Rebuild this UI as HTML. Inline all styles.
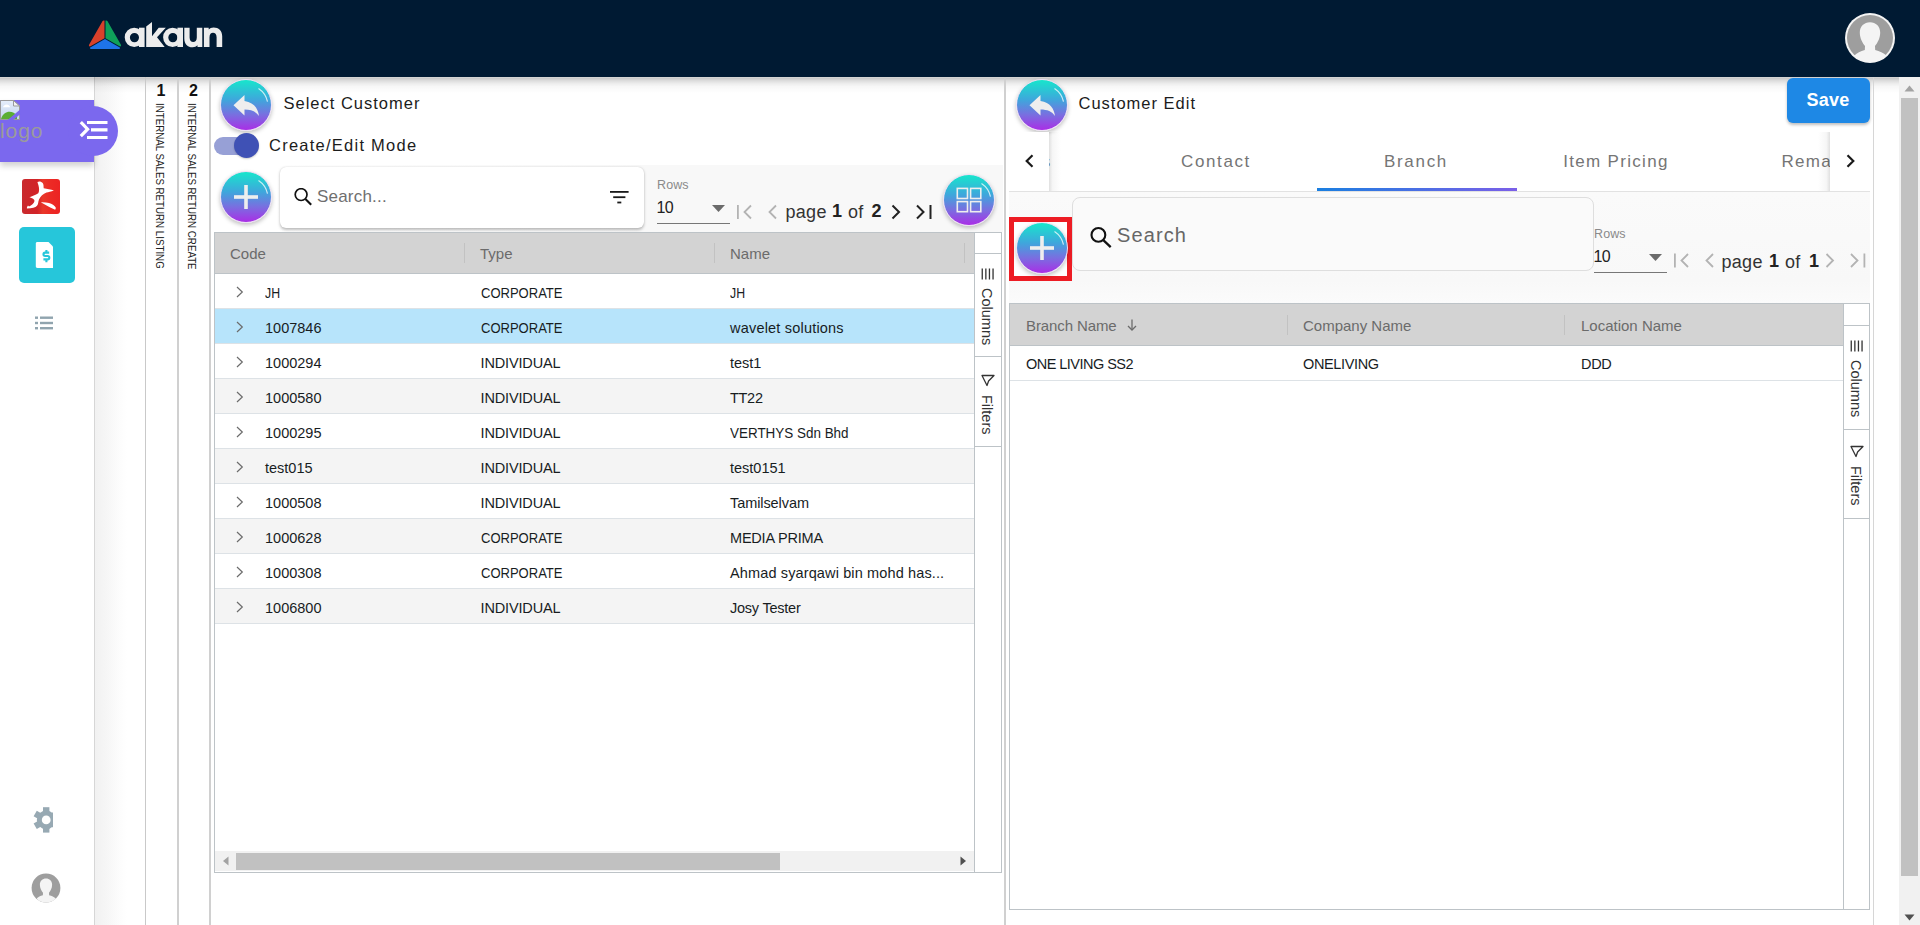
<!DOCTYPE html>
<html><head><meta charset="utf-8">
<style>
*{box-sizing:border-box;margin:0;padding:0}
html,body{width:1920px;height:925px;overflow:hidden;background:#fff;font-family:"Liberation Sans",sans-serif;color:#1a1a1a}
.a{position:absolute}
.t{position:absolute;white-space:nowrap;line-height:1}
#hdr{left:0;top:0;width:1920px;height:77px;background:#001a33}
.hshadow{left:0;top:77px;width:1899px;height:16px;background:linear-gradient(rgba(0,0,0,.16) 0,rgba(0,0,0,.2) 1.5px,rgba(0,0,0,.14) 3.5px,rgba(0,0,0,.075) 6.5px,rgba(0,0,0,.03) 9.5px,rgba(0,0,0,0) 16px)}
.vl{position:absolute;width:2px;background:#d0d0d0}
.btn{position:absolute;width:52px;height:52px;border-radius:50%;background:linear-gradient(#17e6cc 0%,#3fa6dc 40%,#7a6ee0 70%,#a92ee6 100%);box-shadow:0 2px 4px rgba(0,0,0,.25);border:1px solid #ecdff3}
.gloss{position:absolute;left:0;top:0}
.grid .hd{position:absolute;background:#d3d3d3;border-bottom:1px solid #bdc3c7}
.row{position:absolute;height:35px;border-bottom:1px solid #dde2e6}
.cell{position:absolute;top:0;height:35px;line-height:35px;font-size:14.5px;color:#181d1f;white-space:nowrap}
.hcell{position:absolute;font-size:15px;color:#6b6b6b;white-space:nowrap}
.sep{position:absolute;width:1px;background:#c4c4c4}
.poppins{letter-spacing:.4px}
</style></head>
<body>

<!-- HEADER -->
<div id="hdr" class="a">
  <svg class="a" style="left:86px;top:18px" width="38" height="34" viewBox="0 0 38 34">
    <path d="M18.5 2.6 C17.8 2.2 17 2.4 16.6 3.1 L3.2 26.6 C2.6 27.6 3 28.6 4 28.6 L18.5 20.2 Z" fill="#d9412b"/>
    <path d="M19.5 2.6 C20.2 2.2 21 2.4 21.4 3.1 L34.8 26.6 C35.4 27.6 35 28.6 34 28.6 L19.5 20.2 Z" fill="#0fa15a"/>
    <path d="M19 21 L4.2 29.6 C3.6 30.2 4 31 5 31 L33 31 C34 31 34.4 30.2 33.8 29.6 Z" fill="#1e73e8"/>
  </svg>
  <svg class="a" style="left:120px;top:18px" width="106" height="34" viewBox="0 0 106 34">
    <g fill="#ececec">
    <path fill-rule="evenodd" d="M4.7,19.35 a9.5,9.65 0 1,0 19,0 a9.5,9.65 0 1,0 -19,0 Z M9.9,19.6 a4.55,4.7 0 1,0 9.1,0 a4.55,4.7 0 1,0 -9.1,0 Z"/>
    <rect x="19" y="9.7" width="5.6" height="19.3"/>
    <path d="M26.2,8.6 L32,3.9 L32,18.2 L38.7,9.7 L45.8,9.7 L37,19.3 L44.7,29 L26.2,29 Z"/>
    <path fill-rule="evenodd" d="M43.1,19.35 a9.5,9.65 0 1,0 19,0 a9.5,9.65 0 1,0 -19,0 Z M48.3,19.6 a4.55,4.7 0 1,0 9.1,0 a4.55,4.7 0 1,0 -9.1,0 Z"/>
    <rect x="57.4" y="9.7" width="5.6" height="19.3"/>
    <path d="M64.3,9.7 H69.6 V19.5 C69.6,22.6 71.2,24 73.2,24 C75.2,24 76.8,22.6 76.8,19.5 V9.7 H82.3 V29 H77.5 V27.3 C76.3,28.6 74.8,29.3 72.6,29.3 C67.6,29.3 64.3,26 64.3,20.5 Z"/>
    <path d="M83.9,29 V9.7 H88.7 V11.4 C89.9,10.1 91.4,9.4 93.6,9.4 C98.6,9.4 102.2,12.7 102.2,18.2 V29 H96.6 V19.2 C96.6,16.1 95,14.7 93,14.7 C91,14.7 89.5,16.1 89.5,19.2 V29 Z"/>
    </g>
  </svg>
  <div class="a" style="left:1845px;top:13px;width:50px;height:50px;border-radius:50%;background:#f4f4f4;overflow:hidden">
    <svg width="50" height="50" viewBox="0 0 50 50" style="position:absolute;left:0;top:0">
      <circle cx="25" cy="25" r="23" fill="#9e9e9e"/>
      <path d="M25,9.3 C30.8,9.3 35.2,13.5 35.2,19.5 C35.2,25 32.5,30 30,33 L30.2,37 C34.5,38 38.5,40 41.5,42.4 C37.5,47 31.5,49 25,49 C18.5,49 12.5,47 9.4,42.4 C12,40 15.5,38 19.8,37 L20,33 C17.5,30 14.8,25 14.8,19.5 C14.8,13.5 19.2,9.3 25,9.3 Z" fill="#f4f4f4"/>
    </svg>
  </div>
</div>

<!-- SIDEBAR -->
<div class="a" style="left:0;top:77px;width:94px;height:848px;background:#fff"></div>
<div class="a" style="left:94px;top:77px;width:1px;height:848px;background:#d6d6d6"></div>
<div class="a" style="left:95px;top:77px;width:50px;height:848px;background:linear-gradient(90deg,#f1f1f1 0,#f6f6f6 12px,#fcfcfc 24px,#fff 32px)"></div>
<div class="a hshadow"></div>
<div class="a" style="left:0;top:100px;width:94px;height:62px;background:#7b68ee;box-shadow:0 4px 6px rgba(0,0,0,.18)"></div>
<div class="a" style="left:68px;top:106px;width:50px;height:50px;border-radius:50%;background:#7b68ee"></div>
<svg class="a" style="left:0;top:98px" width="22" height="24" viewBox="0 0 22 24">
  <defs><linearGradient id="sky" x1="0" y1="0" x2="0" y2="1"><stop offset="0" stop-color="#e6eefb"/><stop offset="1" stop-color="#c3d5ef"/></linearGradient></defs>
  <path d="M0.5,2.5 H13.5 L19.5,8 V21.5 H0.5 Z" fill="url(#sky)" stroke="#9a9a9a" stroke-width="1"/>
  <path d="M13.5,2.5 V8 H19.5 Z" fill="#f2f2f2" stroke="#9a9a9a" stroke-width="1"/>
  <path d="M3,9.2 C3.6,7.4 5,6.6 6.6,6.6 C8.4,6.6 9.6,7.8 10.1,9.2 Z" fill="#fff"/>
  <path d="M1,21 C2.5,16 6,13.7 9.5,13.7 C12.5,13.7 15,15 17,17.5 V21 Z" fill="#5aae32"/>
  <path d="M7.3,22.3 L20.5,11.3 V16.1 L12.9,22.3 Z" fill="#7b68ee"/>
</svg>
<div class="t" style="left:0px;top:120px;font-size:21px;color:#9b9b9b;letter-spacing:.9px">logo</div>
<svg class="a" style="left:79px;top:120px" width="30" height="21" viewBox="0 0 30 21">
  <path d="M1.8 2.2 L8.6 9.2 L1.8 16.2" fill="none" stroke="#fff" stroke-width="3.2"/>
  <rect x="8" y="1" width="20.5" height="3" fill="#fff"/>
  <rect x="12" y="8.2" width="16.5" height="3.3" fill="#fff"/>
  <rect x="8" y="16" width="20.5" height="3" fill="#fff"/>
</svg>
<!-- red app icon -->
<div class="a" style="left:22px;top:179px;width:38px;height:35px;border-radius:3px;background:linear-gradient(90deg,#c92a2e 0%,#d22327 40%,#e8382a 55%,#ec2a25 75%,#ec2323 100%)"></div>
<svg class="a" style="left:22px;top:178px" width="38" height="36" viewBox="0 0 38 36">
  <path fill="#fff" d="M15.5,4 C17,3 19.5,3.5 20.7,5 C21.8,6.5 21.5,8.5 21.7,10.3 C25,10.8 29,11.5 31.9,12.4 C29,13.5 26.5,13.8 24.5,14.6 C21,16 18.5,18.5 17,21.5 C16,24 16.5,26 15,27.8 C13.5,29.5 10,30.5 5,30.6 C4.5,29.8 5.3,28.5 6,27.4 L7,28.4 C9.5,27.5 12,25.5 12.5,23 C12.7,21.5 10,20 7.4,19.3 C10,18.2 13.5,17 16.3,15.2 C17.5,13 17.2,10 16.5,7.5 C16.2,6 15.5,5 15.5,4 Z"/>
  <path fill="#fff" d="M18.8,24.2 C21.5,24 24.5,24.3 27,25 C30,26 32.5,27.5 33.6,29.3 C34,30.3 33.6,31.5 33.1,31.7 C31,30.8 29,29.7 26.4,28.4 C23.5,27 21,25.5 18.8,24.2 Z"/>
</svg>
<!-- teal doc icon -->
<div class="a" style="left:19px;top:227px;width:56px;height:56px;border-radius:5px;background:#26c6da"></div>
<svg class="a" style="left:35px;top:242px" width="19" height="26" viewBox="0 0 19 26">
  <path d="M2.5 0 H13.5 L18 4.5 V26 H2.5 C1.3 26 0.8 25.3 0.8 24.3 V1.7 C0.8 0.7 1.3 0 2.5 0 Z" fill="#fff"/>
  <path d="M14.2,10.6 H10.1 Q8.5,10.6 8.5,12.3 Q8.5,14 10.1,14 H12.7 Q14.3,14 14.3,15.7 Q14.3,17.4 12.7,17.4 H8.4 M11.4,8 V10.6 M11.4,17.4 V20.2" fill="none" stroke="#26c6da" stroke-width="2.1"/>
</svg>
<!-- list icon -->
<svg class="a" style="left:35px;top:316px" width="19" height="14" viewBox="0 0 19 14">
  <g fill="#90a4ae"><rect x="0" y="0.5" width="3" height="2.4"/><rect x="5" y="0.5" width="13" height="2.4"/>
  <rect x="0" y="5.8" width="3" height="2.4"/><rect x="5" y="5.8" width="13" height="2.4"/>
  <rect x="0" y="11" width="3" height="2.4"/><rect x="5" y="11" width="13" height="2.4"/></g>
</svg>
<!-- gear -->
<div class="a" style="left:33px;top:806px;width:20px;height:28px;overflow:hidden">
<svg width="28" height="28" viewBox="0 0 28 28" style="position:absolute;left:0;top:0">
  <g fill="#97a9b3" transform="translate(13.2 13.9)">
    <circle r="9.4"/>
    <rect x="-3.2" y="-12.7" width="6.4" height="6" />
    <rect x="-3.2" y="-12.7" width="6.4" height="6" transform="rotate(60)"/>
    <rect x="-3.2" y="-12.7" width="6.4" height="6" transform="rotate(120)"/>
    <rect x="-3.2" y="-12.7" width="6.4" height="6" transform="rotate(180)"/>
    <rect x="-3.2" y="-12.7" width="6.4" height="6" transform="rotate(240)"/>
    <rect x="-3.2" y="-12.7" width="6.4" height="6" transform="rotate(300)"/>
    <circle r="4.4" fill="#fff"/>
  </g>
</svg></div>
<!-- sidebar avatar -->
<svg class="a" style="left:31px;top:873px" width="30" height="30" viewBox="0 0 50 50">
  <circle cx="25" cy="25" r="24" fill="#9e9e9e"/>
  <path d="M25,9.3 C30.8,9.3 35.2,13.5 35.2,19.5 C35.2,25 32.5,30 30,33 L30.2,37 C34.5,38 38.5,40 41.5,42.4 C37.5,47 31.5,49 25,49 C18.5,49 12.5,47 9.4,42.4 C12,40 15.5,38 19.8,37 L20,33 C17.5,30 14.8,25 14.8,19.5 C14.8,13.5 19.2,9.3 25,9.3 Z" fill="#f4f4f4"/>
</svg>

<!-- VERTICAL TABS -->
<div class="vl" style="left:145px;top:77px;height:848px;width:1px;background:#c9c9c9"></div>
<div class="vl" style="left:177px;top:77px;height:848px"></div>
<div class="vl" style="left:209px;top:77px;height:848px"></div>
<div class="t" style="left:156.5px;top:82.5px;font-size:16px;font-weight:bold;color:#111">1</div>
<div class="t" style="left:189px;top:82.5px;font-size:16px;font-weight:bold;color:#111">2</div>
<div class="t" style="left:154.3px;top:103px;font-size:11px;color:#222;transform-origin:0 0;transform:translate(11px,0) rotate(90deg) scaleX(.885)">INTERNAL SALES RETURN LISTING</div>
<div class="t" style="left:186.3px;top:103px;font-size:11px;color:#222;transform-origin:0 0;transform:translate(11px,0) rotate(90deg) scaleX(.885)">INTERNAL SALES RETURN CREATE</div>
<!-- LEFT PANEL -->
<div class="btn" style="left:220px;top:79px"></div>
<svg class="a" style="left:220px;top:79px" width="52" height="52" viewBox="-1 -1 52 52"><path d="M37.5 8.4 A21 21 0 0 1 46.5 21.6" fill="none" stroke="rgba(255,255,255,.75)" stroke-width="1.2"/><path d="M23.5 15 L12.5 25.3 L23.5 35.5 V29.5 C30.5 29.5 35 31.5 38 36 C37 29 33.5 22.5 23.5 21 Z" fill="#eeeeee"/></svg>
<div class="t" style="left:283.5px;top:95px;font-size:16.5px;letter-spacing:1px;color:#1c1c1c">Select Customer</div>
<div class="a" style="left:214px;top:137px;width:36px;height:18px;border-radius:9px;background:#97a0d6"></div>
<div class="a" style="left:234px;top:133px;width:25px;height:25px;border-radius:50%;background:#3f51b5;box-shadow:0 1px 2px rgba(0,0,0,.2)"></div>
<div class="t" style="left:269px;top:137px;font-size:16.5px;letter-spacing:1.25px;color:#1c1c1c">Create/Edit Mode</div>
<div class="a" style="left:211px;top:165px;width:792px;height:67px;background:linear-gradient(90deg,#fff 0%,#fff 8%,#f8f8f8 55%,#f8f8f8)"></div>
<div class="btn" style="left:220px;top:170.5px"></div>
<svg class="a" style="left:220px;top:170.5px" width="52" height="52" viewBox="-1 -1 52 52"><path d="M37.5 8.4 A21 21 0 0 1 46.5 21.6" fill="none" stroke="rgba(255,255,255,.75)" stroke-width="1.2"/><rect x="23.2" y="13" width="3.6" height="24" fill="#eee"/><rect x="13" y="23.2" width="24" height="3.6" fill="#eee"/></svg>
<div class="a" style="left:280px;top:166.5px;width:364px;height:61px;border-radius:6px;background:#fff;box-shadow:0 1.5px 3px rgba(0,0,0,.26),0 0 1px rgba(0,0,0,.12)"></div>
<svg class="a" style="left:294px;top:188px" width="20" height="20" viewBox="0 0 20 20"><circle cx="7.1" cy="6.6" r="5.9" fill="none" stroke="#111" stroke-width="1.7"/><path d="M11.4 11 L17.2 16.8" stroke="#111" stroke-width="2.1"/></svg>
<div class="t" style="left:317px;top:187.5px;font-size:17px;color:#6f6f6f;letter-spacing:.2px">Search...</div>
<svg class="a" style="left:609.5px;top:191.3px" width="19" height="14" viewBox="0 0 19 14"><rect x="0" y="0" width="18.6" height="1.8" fill="#1a1a1a"/><rect x="3.2" y="5.3" width="12.2" height="1.8" fill="#1a1a1a"/><rect x="7.3" y="10.6" width="4" height="1.8" fill="#1a1a1a"/></svg>
<div class="t" style="left:657px;top:179px;font-size:12.5px;color:#8a8a8a;letter-spacing:.1px">Rows</div>
<div class="t" style="left:656.5px;top:199.5px;font-size:16px;color:#222;letter-spacing:-.6px">10</div>
<svg class="a" style="left:712px;top:205px" width="13" height="7" viewBox="0 0 13 7"><path d="M0 0 H13 L6.5 7 Z" fill="#6b6b6b"/></svg>
<div class="a" style="left:657px;top:223px;width:73px;height:1px;background:#777"></div>
<svg class="a" style="left:736px;top:204px" width="18" height="16" viewBox="0 0 18 16"><rect x="1" y="1" width="1.8" height="14" fill="#b3b3b3"/><path d="M15 1.5 L8.5 8 L15 14.5" fill="none" stroke="#b3b3b3" stroke-width="1.8"/></svg>
<svg class="a" style="left:766px;top:204px" width="12" height="16" viewBox="0 0 12 16"><path d="M10 1.5 L3.5 8 L10 14.5" fill="none" stroke="#b3b3b3" stroke-width="1.8"/></svg>
<div class="t" style="left:785.5px;top:203px;font-size:18px;color:#333;letter-spacing:.3px">page</div>
<div class="t" style="left:832px;top:202px;font-size:18px;font-weight:bold;color:#222">1</div>
<div class="t" style="left:848px;top:203px;font-size:18px;color:#333;letter-spacing:.3px">of</div>
<div class="t" style="left:871.5px;top:202px;font-size:18px;font-weight:bold;color:#222">2</div>
<svg class="a" style="left:890px;top:204px" width="12" height="16" viewBox="0 0 12 16"><path d="M2.5 1.5 L9 8 L2.5 14.5" fill="none" stroke="#222" stroke-width="2"/></svg>
<svg class="a" style="left:915px;top:204px" width="18" height="16" viewBox="0 0 18 16"><path d="M2 1.5 L8.5 8 L2 14.5" fill="none" stroke="#222" stroke-width="2"/><rect x="14.5" y="1" width="2" height="14" fill="#222"/></svg>
<div class="btn" style="left:943px;top:174px"></div>
<svg class="a" style="left:943px;top:174px" width="52" height="52" viewBox="-1 -1 52 52"><path d="M37.5 8.4 A21 21 0 0 1 46.5 21.6" fill="none" stroke="rgba(255,255,255,.75)" stroke-width="1.2"/><g fill="none" stroke="#eee" stroke-width="1.6"><rect x="13.3" y="13.4" width="10.2" height="10.1"/><rect x="26.6" y="13.4" width="10.2" height="10.1"/><rect x="13.3" y="26.6" width="10.2" height="10.1"/><rect x="26.6" y="26.6" width="10.2" height="10.1"/></g></svg>
<div class="a" style="left:214px;top:232px;width:788px;height:641px;border:1px solid #bdc3c7;background:#fff"></div>
<div class="a" style="left:215px;top:233px;width:759px;height:41px;background:#d3d3d3;border-bottom:1px solid #bdc3c7"></div>
<div class="sep" style="left:464px;top:243px;height:20px;background:#c2c2c2"></div>
<div class="sep" style="left:714px;top:243px;height:20px;background:#c2c2c2"></div>
<div class="sep" style="left:964px;top:243px;height:20px;background:#c2c2c2"></div>
<div class="t" style="left:230px;top:245.5px;font-size:15px;color:#6b6b6b">Code</div>
<div class="t" style="left:480px;top:245.5px;font-size:15px;color:#6b6b6b">Type</div>
<div class="t" style="left:730px;top:245.5px;font-size:15px;color:#6b6b6b">Name</div>
<div class="a" style="left:215px;top:274px;width:759px;height:35px;background:#fff;border-bottom:1px solid #dde2e6"></div>
<svg class="a" style="left:236px;top:286px" width="8" height="12" viewBox="0 0 8 12"><path d="M1 1 L6.3 6 L1 11" fill="none" stroke="#6b6b6b" stroke-width="1.2"/></svg>
<div class="t" style="left:265px;top:285.7px;font-size:14.5px;transform-origin:0 0;transform:scaleX(.85);color:#181d1f">JH</div>
<div class="t" style="left:480.5px;top:285.7px;font-size:14.5px;transform-origin:0 0;transform:scaleX(.898);color:#181d1f">CORPORATE</div>
<div class="t" style="left:730px;top:285.7px;font-size:14.5px;transform-origin:0 0;transform:scaleX(.85);color:#181d1f">JH</div>
<div class="a" style="left:215px;top:309px;width:759px;height:35px;background:#b7e4fb;border-bottom:1px solid #dde2e6"></div>
<svg class="a" style="left:236px;top:321px" width="8" height="12" viewBox="0 0 8 12"><path d="M1 1 L6.3 6 L1 11" fill="none" stroke="#6b6b6b" stroke-width="1.2"/></svg>
<div class="t" style="left:265px;top:320.7px;font-size:14.5px;letter-spacing:0px;color:#181d1f">1007846</div>
<div class="t" style="left:480.5px;top:320.7px;font-size:14.5px;transform-origin:0 0;transform:scaleX(.898);color:#181d1f">CORPORATE</div>
<div class="t" style="left:730px;top:320.7px;font-size:14.5px;letter-spacing:0.2px;color:#181d1f">wavelet solutions</div>
<div class="a" style="left:215px;top:344px;width:759px;height:35px;background:#fff;border-bottom:1px solid #dde2e6"></div>
<svg class="a" style="left:236px;top:356px" width="8" height="12" viewBox="0 0 8 12"><path d="M1 1 L6.3 6 L1 11" fill="none" stroke="#6b6b6b" stroke-width="1.2"/></svg>
<div class="t" style="left:265px;top:355.7px;font-size:14.5px;letter-spacing:0px;color:#181d1f">1000294</div>
<div class="t" style="left:480.5px;top:355.7px;font-size:14.5px;letter-spacing:-0.14px;color:#181d1f">INDIVIDUAL</div>
<div class="t" style="left:730px;top:355.7px;font-size:14.5px;letter-spacing:0px;color:#181d1f">test1</div>
<div class="a" style="left:215px;top:379px;width:759px;height:35px;background:#f4f4f4;border-bottom:1px solid #dde2e6"></div>
<svg class="a" style="left:236px;top:391px" width="8" height="12" viewBox="0 0 8 12"><path d="M1 1 L6.3 6 L1 11" fill="none" stroke="#6b6b6b" stroke-width="1.2"/></svg>
<div class="t" style="left:265px;top:390.7px;font-size:14.5px;letter-spacing:0px;color:#181d1f">1000580</div>
<div class="t" style="left:480.5px;top:390.7px;font-size:14.5px;letter-spacing:-0.14px;color:#181d1f">INDIVIDUAL</div>
<div class="t" style="left:730px;top:390.7px;font-size:14.5px;letter-spacing:-0.3px;color:#181d1f">TT22</div>
<div class="a" style="left:215px;top:414px;width:759px;height:35px;background:#fff;border-bottom:1px solid #dde2e6"></div>
<svg class="a" style="left:236px;top:426px" width="8" height="12" viewBox="0 0 8 12"><path d="M1 1 L6.3 6 L1 11" fill="none" stroke="#6b6b6b" stroke-width="1.2"/></svg>
<div class="t" style="left:265px;top:425.7px;font-size:14.5px;letter-spacing:0px;color:#181d1f">1000295</div>
<div class="t" style="left:480.5px;top:425.7px;font-size:14.5px;letter-spacing:-0.14px;color:#181d1f">INDIVIDUAL</div>
<div class="t" style="left:730px;top:425.7px;font-size:14.5px;transform-origin:0 0;transform:scaleX(.927);color:#181d1f">VERTHYS Sdn Bhd</div>
<div class="a" style="left:215px;top:449px;width:759px;height:35px;background:#f4f4f4;border-bottom:1px solid #dde2e6"></div>
<svg class="a" style="left:236px;top:461px" width="8" height="12" viewBox="0 0 8 12"><path d="M1 1 L6.3 6 L1 11" fill="none" stroke="#6b6b6b" stroke-width="1.2"/></svg>
<div class="t" style="left:265px;top:460.7px;font-size:14.5px;letter-spacing:0px;color:#181d1f">test015</div>
<div class="t" style="left:480.5px;top:460.7px;font-size:14.5px;letter-spacing:-0.14px;color:#181d1f">INDIVIDUAL</div>
<div class="t" style="left:730px;top:460.7px;font-size:14.5px;letter-spacing:0px;color:#181d1f">test0151</div>
<div class="a" style="left:215px;top:484px;width:759px;height:35px;background:#fff;border-bottom:1px solid #dde2e6"></div>
<svg class="a" style="left:236px;top:496px" width="8" height="12" viewBox="0 0 8 12"><path d="M1 1 L6.3 6 L1 11" fill="none" stroke="#6b6b6b" stroke-width="1.2"/></svg>
<div class="t" style="left:265px;top:495.7px;font-size:14.5px;letter-spacing:0px;color:#181d1f">1000508</div>
<div class="t" style="left:480.5px;top:495.7px;font-size:14.5px;letter-spacing:-0.14px;color:#181d1f">INDIVIDUAL</div>
<div class="t" style="left:730px;top:495.7px;font-size:14.5px;letter-spacing:-0.08px;color:#181d1f">Tamilselvam</div>
<div class="a" style="left:215px;top:519px;width:759px;height:35px;background:#f4f4f4;border-bottom:1px solid #dde2e6"></div>
<svg class="a" style="left:236px;top:531px" width="8" height="12" viewBox="0 0 8 12"><path d="M1 1 L6.3 6 L1 11" fill="none" stroke="#6b6b6b" stroke-width="1.2"/></svg>
<div class="t" style="left:265px;top:530.7px;font-size:14.5px;letter-spacing:0px;color:#181d1f">1000628</div>
<div class="t" style="left:480.5px;top:530.7px;font-size:14.5px;transform-origin:0 0;transform:scaleX(.898);color:#181d1f">CORPORATE</div>
<div class="t" style="left:730px;top:530.7px;font-size:14.5px;letter-spacing:-0.2px;color:#181d1f">MEDIA PRIMA</div>
<div class="a" style="left:215px;top:554px;width:759px;height:35px;background:#fff;border-bottom:1px solid #dde2e6"></div>
<svg class="a" style="left:236px;top:566px" width="8" height="12" viewBox="0 0 8 12"><path d="M1 1 L6.3 6 L1 11" fill="none" stroke="#6b6b6b" stroke-width="1.2"/></svg>
<div class="t" style="left:265px;top:565.7px;font-size:14.5px;letter-spacing:0px;color:#181d1f">1000308</div>
<div class="t" style="left:480.5px;top:565.7px;font-size:14.5px;transform-origin:0 0;transform:scaleX(.898);color:#181d1f">CORPORATE</div>
<div class="t" style="left:730px;top:565.7px;font-size:14.5px;letter-spacing:0.13px;color:#181d1f">Ahmad syarqawi bin mohd has...</div>
<div class="a" style="left:215px;top:589px;width:759px;height:35px;background:#f4f4f4;border-bottom:1px solid #dde2e6"></div>
<svg class="a" style="left:236px;top:601px" width="8" height="12" viewBox="0 0 8 12"><path d="M1 1 L6.3 6 L1 11" fill="none" stroke="#6b6b6b" stroke-width="1.2"/></svg>
<div class="t" style="left:265px;top:600.7px;font-size:14.5px;letter-spacing:0px;color:#181d1f">1006800</div>
<div class="t" style="left:480.5px;top:600.7px;font-size:14.5px;letter-spacing:-0.14px;color:#181d1f">INDIVIDUAL</div>
<div class="t" style="left:730px;top:600.7px;font-size:14.5px;letter-spacing:-0.23px;color:#181d1f">Josy Tester</div>
<div class="a" style="left:974px;top:233px;width:1px;height:639px;background:#bdc3c7"></div>
<div class="a" style="left:975px;top:253px;width:26px;height:1px;background:#bdc3c7"></div>
<div class="a" style="left:975px;top:356px;width:26px;height:1px;background:#bdc3c7"></div>
<div class="a" style="left:975px;top:446px;width:26px;height:1px;background:#bdc3c7"></div>
<svg class="a" style="left:981px;top:268px" width="14" height="12" viewBox="0 0 14 12"><g fill="#333"><rect x="0.6" y="0.5" width="1.3" height="11"/><rect x="4.2" y="0.5" width="1.3" height="11"/><rect x="7.8" y="0.5" width="1.3" height="11"/><rect x="11.4" y="0.5" width="1.3" height="11"/></g></svg>
<div class="t" style="left:981px;top:288px;font-size:14.5px;color:#333;transform-origin:0 0;transform:translate(13px,0) rotate(90deg)">Columns</div>
<svg class="a" style="left:981px;top:374px" width="14" height="13" viewBox="0 0 14 13"><path d="M1 1.5 H13 L7.6 7 L6 11.5 Z" fill="none" stroke="#333" stroke-width="1.3" stroke-linejoin="round"/></svg>
<div class="t" style="left:981px;top:395px;font-size:14.5px;color:#333;transform-origin:0 0;transform:translate(13px,0) rotate(90deg)">Filters</div>
<div class="a" style="left:215px;top:851px;width:759px;height:20px;background:#f1f1f1"></div>
<div class="a" style="left:236px;top:853px;width:544px;height:17px;background:#c1c1c1"></div>
<svg class="a" style="left:222px;top:856px" width="8" height="10" viewBox="0 0 8 10"><path d="M6.5 0.5 V9.5 L1 5 Z" fill="#a3a3a3"/></svg>
<svg class="a" style="left:959px;top:856px" width="8" height="10" viewBox="0 0 8 10"><path d="M1.5 0.5 V9.5 L7 5 Z" fill="#505050"/></svg>
<!-- END LEFT -->
<!-- RIGHT PANEL -->
<div class="vl" style="left:1004px;top:77px;height:848px"></div>
<div class="a" style="left:1873px;top:77px;width:1px;height:848px;background:#d6d6d6"></div>
<div class="btn" style="left:1016px;top:79px"></div>
<svg class="a" style="left:1016px;top:79px" width="52" height="52" viewBox="-1 -1 52 52"><path d="M37.5 8.4 A21 21 0 0 1 46.5 21.6" fill="none" stroke="rgba(255,255,255,.75)" stroke-width="1.2"/><path d="M23.5 15 L12.5 25.3 L23.5 35.5 V29.5 C30.5 29.5 35 31.5 38 36 C37 29 33.5 22.5 23.5 21 Z" fill="#eeeeee"/></svg>
<div class="t" style="left:1078.5px;top:95px;font-size:16.5px;letter-spacing:1px;color:#1c1c1c">Customer Edit</div>
<div class="a" style="left:1787px;top:78px;width:83px;height:45px;border-radius:6px;background:#1e88e5;box-shadow:0 2px 3px rgba(0,0,0,.25)"></div>
<div class="t" style="left:1806.5px;top:91px;font-size:18px;font-weight:bold;color:#fff;letter-spacing:.2px">Save</div>
<div class="a" style="left:1009px;top:191px;width:861px;height:1px;background:#e2e2e2"></div>
<div class="a" style="left:1009px;top:132px;width:861px;height:59px;overflow:hidden">
<div class="t" style="left:-188px;width:400px;text-align:center;top:20.5px;font-size:17px;letter-spacing:1.3px;color:#757575">Details</div>
<div class="t" style="left:7px;width:400px;text-align:center;top:20.5px;font-size:17px;letter-spacing:1.6px;color:#757575">Contact</div>
<div class="t" style="left:207px;width:400px;text-align:center;top:20.5px;font-size:17px;letter-spacing:1.7px;color:#757575">Branch</div>
<div class="t" style="left:407px;width:400px;text-align:center;top:20.5px;font-size:17px;letter-spacing:1.3px;color:#757575">Item Pricing</div>
<div class="t" style="left:611px;width:400px;text-align:center;top:20.5px;font-size:17px;letter-spacing:1.3px;color:#757575">Remarks</div>
</div>
<div class="a" style="left:1317px;top:188px;width:200px;height:3px;background:linear-gradient(90deg,#1a7fe0,#7b5fe8)"></div>
<div class="a" style="left:1049px;top:132px;width:12px;height:59px;background:linear-gradient(90deg,rgba(0,0,0,.12),rgba(0,0,0,.035) 30%,rgba(0,0,0,0))"></div><div class="a" style="left:1009px;top:132px;width:40px;height:59px;background:#fff"></div>
<svg class="a" style="left:1024px;top:154px" width="11" height="14" viewBox="0 0 11 14"><path d="M8.5 1.2 L2.7 7 L8.5 12.8" fill="none" stroke="#1a1a1a" stroke-width="2.2"/></svg>
<div class="a" style="left:1818px;top:132px;width:12px;height:59px;background:linear-gradient(270deg,rgba(0,0,0,.12),rgba(0,0,0,.035) 30%,rgba(0,0,0,0))"></div><div class="a" style="left:1830px;top:132px;width:40px;height:59px;background:#fff"></div>
<svg class="a" style="left:1845px;top:154px" width="11" height="14" viewBox="0 0 11 14"><path d="M2.5 1.2 L8.3 7 L2.5 12.8" fill="none" stroke="#1a1a1a" stroke-width="2.2"/></svg>
<div class="a" style="left:1009px;top:192px;width:861px;height:111px;background:linear-gradient(#fafafa,#f8f8f8 80%,#fbfbfb)"></div>
<div class="a" style="left:1009px;top:217px;width:63px;height:64px;border:5px solid #ed1c24;background:#fff"></div>
<div class="btn" style="left:1016px;top:222px"></div>
<svg class="a" style="left:1016px;top:222px" width="52" height="52" viewBox="-1 -1 52 52"><path d="M37.5 8.4 A21 21 0 0 1 46.5 21.6" fill="none" stroke="rgba(255,255,255,.75)" stroke-width="1.2"/><rect x="23.2" y="13" width="3.6" height="24" fill="#eee"/><rect x="13" y="23.2" width="24" height="3.6" fill="#eee"/></svg>
<div class="a" style="left:1072px;top:197px;width:522px;height:74px;border-radius:8px;background:#fafafa;border:1px solid #dedede"></div>
<svg class="a" style="left:1089px;top:226px" width="24" height="23" viewBox="0 0 24 23"><circle cx="9.4" cy="8.9" r="6.9" fill="none" stroke="#111" stroke-width="2.1"/><path d="M14.3 14.2 L21.7 21.2" stroke="#111" stroke-width="2.3"/></svg>
<div class="t" style="left:1117px;top:225px;font-size:20px;color:#666;letter-spacing:1.1px">Search</div>
<div class="t" style="left:1594px;top:228px;font-size:12.5px;color:#8a8a8a;letter-spacing:.1px">Rows</div>
<div class="t" style="left:1593.5px;top:248.5px;font-size:16px;color:#222;letter-spacing:-.6px">10</div>
<svg class="a" style="left:1649px;top:254px" width="13" height="7" viewBox="0 0 13 7"><path d="M0 0 H13 L6.5 7 Z" fill="#6b6b6b"/></svg>
<div class="a" style="left:1594px;top:272px;width:73px;height:1px;background:#777"></div>
<svg class="a" style="left:1673px;top:252px" width="18" height="17" viewBox="0 0 18 16"><rect x="1" y="1" width="1.8" height="14" fill="#b3b3b3"/><path d="M15 1.5 L8.5 8 L15 14.5" fill="none" stroke="#b3b3b3" stroke-width="1.8"/></svg>
<svg class="a" style="left:1703px;top:252px" width="12" height="17" viewBox="0 0 12 16"><path d="M10 1.5 L3.5 8 L10 14.5" fill="none" stroke="#b3b3b3" stroke-width="1.8"/></svg>
<div class="t" style="left:1721.5px;top:252.5px;font-size:18px;color:#333;letter-spacing:.3px">page</div>
<div class="t" style="left:1769px;top:251.5px;font-size:18px;font-weight:bold;color:#222">1</div>
<div class="t" style="left:1785px;top:252.5px;font-size:18px;color:#333;letter-spacing:.3px">of</div>
<div class="t" style="left:1809px;top:251.5px;font-size:18px;font-weight:bold;color:#222">1</div>
<svg class="a" style="left:1824px;top:252px" width="12" height="17" viewBox="0 0 12 16"><path d="M2.5 1.5 L9 8 L2.5 14.5" fill="none" stroke="#b3b3b3" stroke-width="1.8"/></svg>
<svg class="a" style="left:1849px;top:252px" width="18" height="17" viewBox="0 0 18 16"><path d="M2 1.5 L8.5 8 L2 14.5" fill="none" stroke="#b3b3b3" stroke-width="1.8"/><rect x="14.5" y="1" width="1.8" height="14" fill="#b3b3b3"/></svg>
<div class="a" style="left:1009px;top:303px;width:861px;height:607px;border:1px solid #bdc3c7;background:#fff"></div>
<div class="a" style="left:1010px;top:304px;width:834px;height:42px;background:#d3d3d3;border-bottom:1px solid #bdc3c7"></div>
<div class="sep" style="left:1287px;top:315px;height:20px;background:#c2c2c2"></div>
<div class="sep" style="left:1564px;top:315px;height:20px;background:#c2c2c2"></div>
<div class="t" style="left:1026px;top:318px;font-size:15px;color:#6b6b6b;letter-spacing:-.1px">Branch Name</div>
<svg class="a" style="left:1127px;top:319px" width="10" height="12" viewBox="0 0 10 12"><path d="M5 0.5 V11" stroke="#6b6b6b" stroke-width="1.3"/><path d="M1 7 L5 11 L9 7" fill="none" stroke="#6b6b6b" stroke-width="1.3"/></svg>
<div class="t" style="left:1303px;top:318px;font-size:15px;color:#6b6b6b">Company Name</div>
<div class="t" style="left:1581px;top:318px;font-size:15px;color:#6b6b6b">Location Name</div>
<div class="a" style="left:1010px;top:346px;width:834px;height:35px;background:#fff;border-bottom:1px solid #dde2e6"></div>
<div class="t" style="left:1026px;top:356.7px;font-size:14.5px;letter-spacing:-.53px;color:#181d1f">ONE LIVING SS2</div>
<div class="t" style="left:1303px;top:356.7px;font-size:14.5px;letter-spacing:-.36px;color:#181d1f">ONELIVING</div>
<div class="t" style="left:1581px;top:356.7px;font-size:14.5px;letter-spacing:-.3px;color:#181d1f">DDD</div>
<div class="a" style="left:1843px;top:304px;width:1px;height:606px;background:#bdc3c7"></div>
<div class="a" style="left:1844px;top:325px;width:25px;height:1px;background:#bdc3c7"></div>
<div class="a" style="left:1844px;top:429px;width:25px;height:1px;background:#bdc3c7"></div>
<div class="a" style="left:1844px;top:518px;width:25px;height:1px;background:#bdc3c7"></div>
<svg class="a" style="left:1850px;top:340px" width="14" height="12" viewBox="0 0 14 12"><g fill="#333"><rect x="0.6" y="0.5" width="1.3" height="11"/><rect x="4.2" y="0.5" width="1.3" height="11"/><rect x="7.8" y="0.5" width="1.3" height="11"/><rect x="11.4" y="0.5" width="1.3" height="11"/></g></svg>
<div class="t" style="left:1850px;top:360px;font-size:14.5px;color:#333;transform-origin:0 0;transform:translate(13px,0) rotate(90deg)">Columns</div>
<svg class="a" style="left:1850px;top:445px" width="14" height="13" viewBox="0 0 14 13"><path d="M1 1.5 H13 L7.6 7 L6 11.5 Z" fill="none" stroke="#333" stroke-width="1.3" stroke-linejoin="round"/></svg>
<div class="t" style="left:1850px;top:466px;font-size:14.5px;color:#333;transform-origin:0 0;transform:translate(13px,0) rotate(90deg)">Filters</div>
<div class="a" style="left:1899px;top:77px;width:21px;height:848px;background:#f1f1f1"></div>
<div class="a" style="left:1901px;top:98px;width:17px;height:778px;background:#c1c1c1"></div>
<svg class="a" style="left:1904px;top:85px" width="11" height="7" viewBox="0 0 11 7"><path d="M0.5 6.5 H10.5 L5.5 0.5 Z" fill="#a3a3a3"/></svg>
<svg class="a" style="left:1904px;top:914px" width="11" height="7" viewBox="0 0 11 7"><path d="M0.5 0.5 H10.5 L5.5 6.5 Z" fill="#505050"/></svg>
<!-- END RIGHT -->
</body></html>
